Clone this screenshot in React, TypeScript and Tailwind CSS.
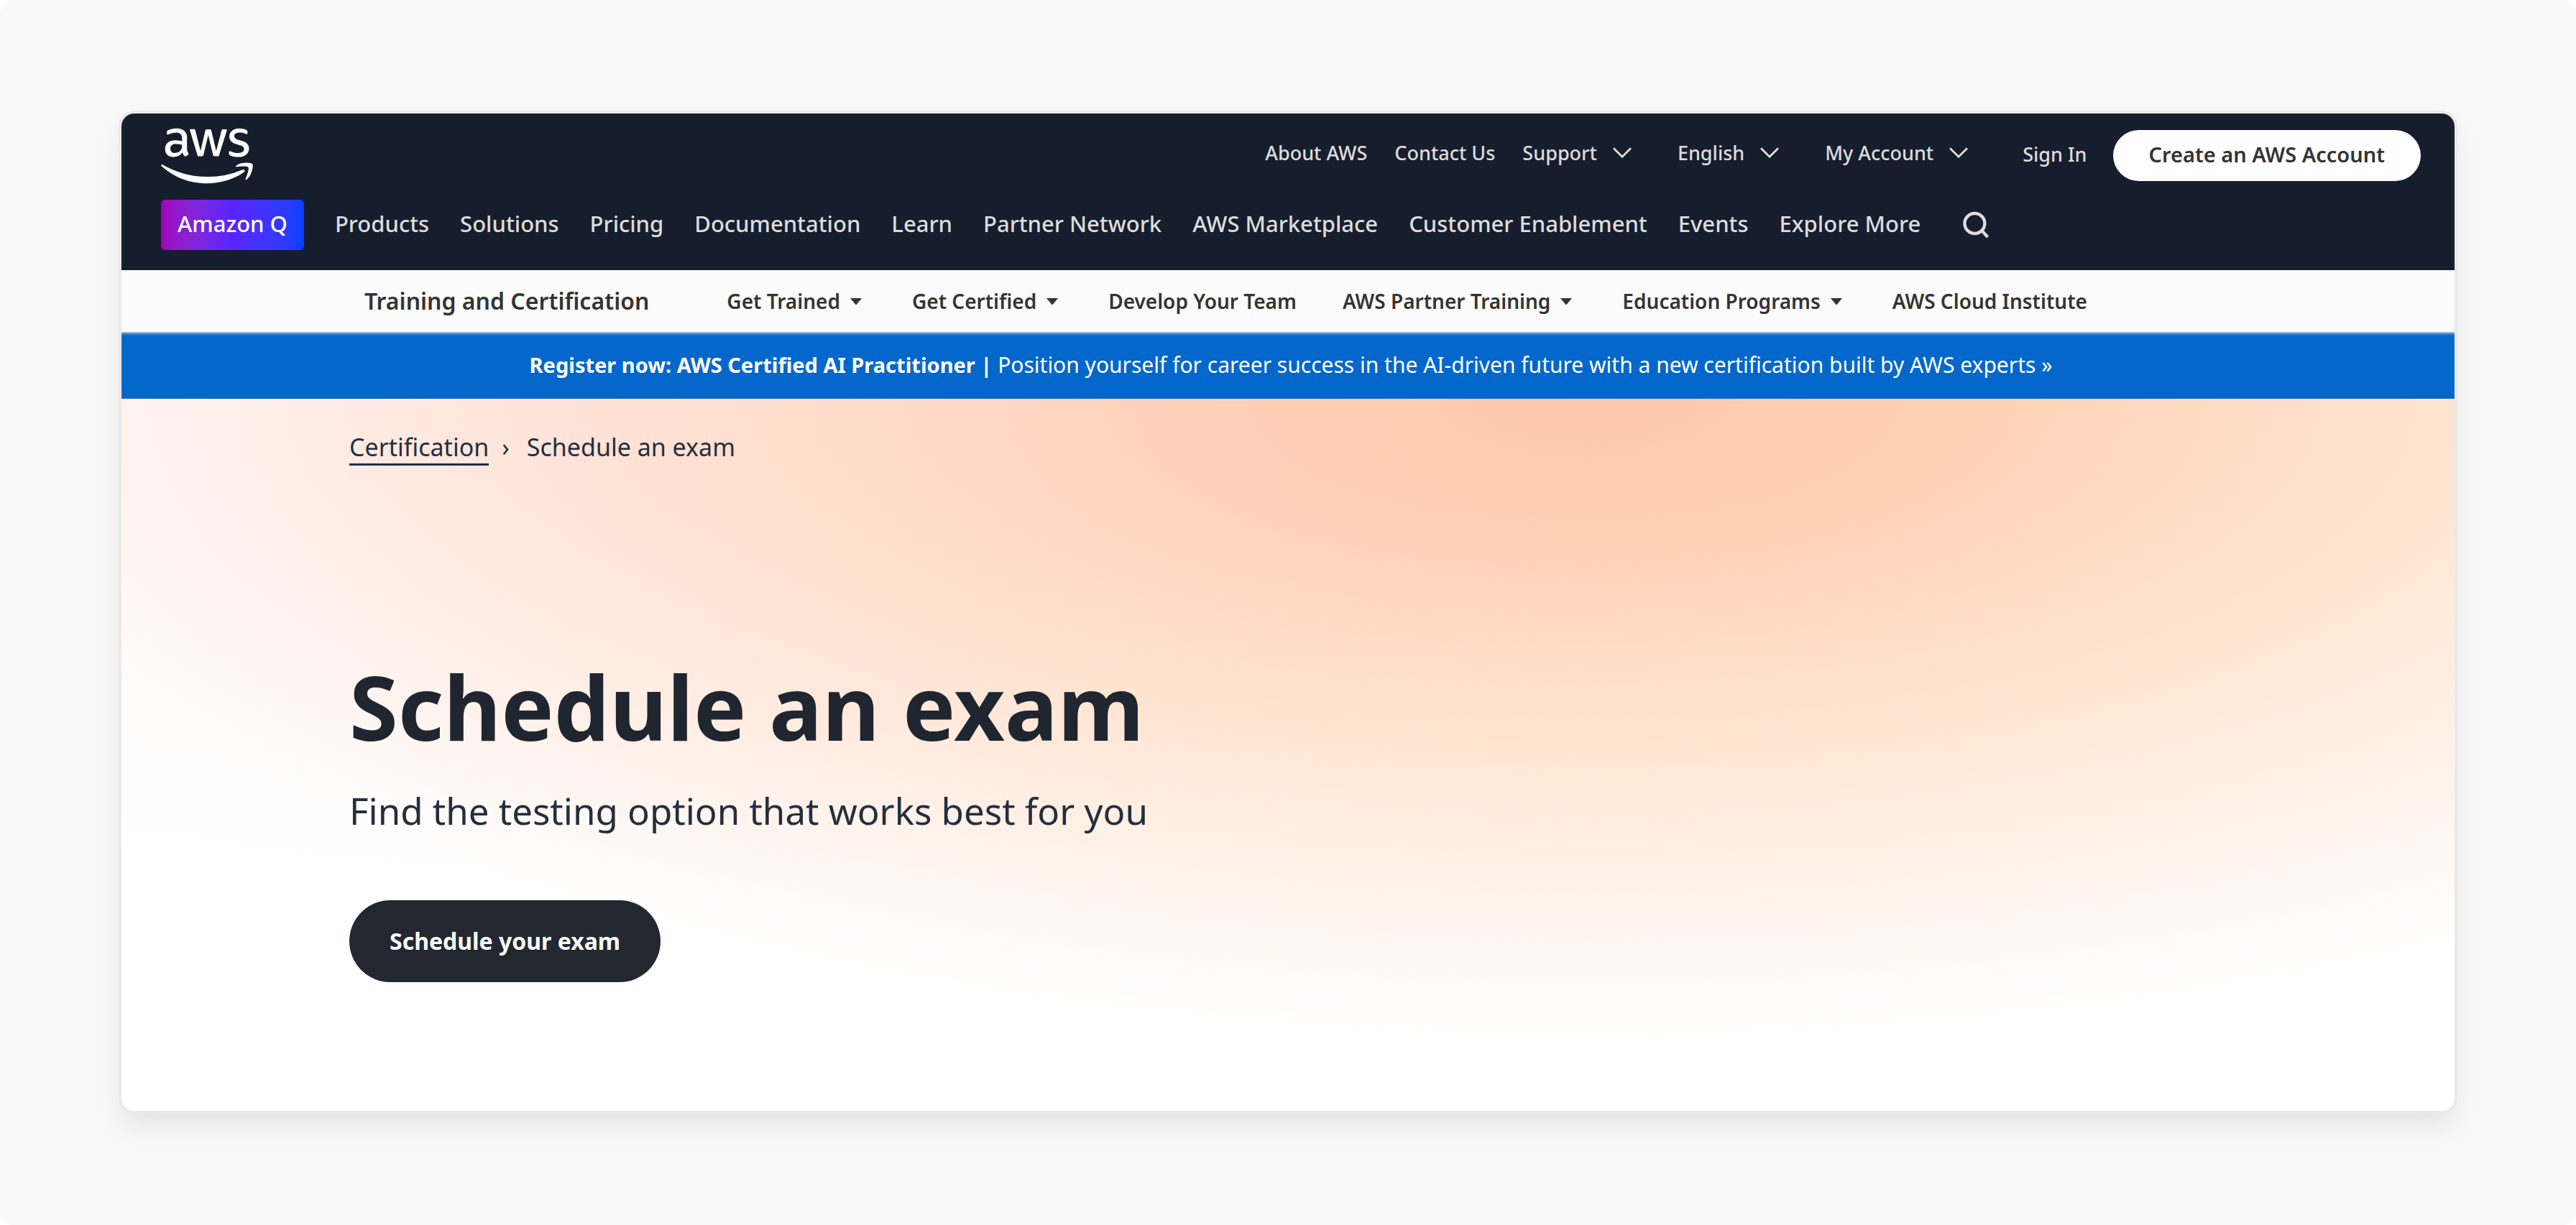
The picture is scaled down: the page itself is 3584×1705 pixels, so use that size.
import { FaAws } from "react-icons/fa";

type MenuItem = { label: string; menu?: boolean };

const accountLinks: MenuItem[] = [
  { label: "About AWS" },
  { label: "Contact Us" },
  { label: "Support", menu: true },
  { label: "English", menu: true },
  { label: "My Account", menu: true },
];

const mainLinks = [
  "Products",
  "Solutions",
  "Pricing",
  "Documentation",
  "Learn",
  "Partner Network",
  "AWS Marketplace",
  "Customer Enablement",
  "Events",
  "Explore More",
];

const trainingLinks: MenuItem[] = [
  { label: "Get Trained", menu: true },
  { label: "Get Certified", menu: true },
  { label: "Develop Your Team" },
  { label: "AWS Partner Training", menu: true },
  { label: "Education Programs", menu: true },
  { label: "AWS Cloud Institute" },
];

function Chevron() {
  return (
    <svg viewBox="0 0 26 15" className="h-[15px] w-[26px]" fill="none" stroke="currentColor" strokeWidth="2.8" aria-hidden="true">
      <path d="M1 1.2 13 13.2 25 1.2" />
    </svg>
  );
}

function Caret() {
  return (
    <svg viewBox="0 0 16 9" className="h-[9px] w-4" fill="currentColor" aria-hidden="true">
      <path d="M0 0h16L9 8.4a1.4 1.4 0 0 1-2 0Z" />
    </svg>
  );
}

function SearchIcon() {
  return (
    <svg viewBox="0 0 36 38" className="h-[38px] w-9" fill="none" stroke="currentColor" strokeWidth="4.4" aria-hidden="true">
      <circle cx="16.4" cy="17" r="14" />
      <path d="m26 26.500 8.500 9.500" />
    </svg>
  );
}

function Header() {
  return (
    <header className="bg-[#161e2d] pt-[23px] pr-[47px] pb-7 pl-[55px] text-[#dcdcdc]">
      <div className="flex h-[71px] items-center justify-between">
        <a href="#" aria-label="AWS home" className="text-white">
          <FaAws className="h-[102px] w-32" />
        </a>
        <nav aria-label="Account" className="flex items-center text-[27px] leading-9 font-medium">
          <ul className="mb-2 flex items-center gap-[38px]">
            {accountLinks.map(({ label, menu }) => (
              <li key={label}>
                {menu ? (
                  <button type="button" className="flex items-center gap-[22px] pr-[26px]">
                    {label}
                    <Chevron />
                  </button>
                ) : (
                  <a href="#">{label}</a>
                )}
              </li>
            ))}
          </ul>
          <a href="#" className="mb-1 ml-[50px]">
            Sign In
          </a>
          <a
            href="#"
            className="ml-9 flex h-[71px] items-center rounded-full bg-white px-[50px] pb-1 text-[29px] font-semibold text-[#333]"
          >
            Create an AWS Account
          </a>
        </nav>
      </div>

      <nav aria-label="Main" className="mt-[26px] flex items-center gap-[43px] text-[31px] leading-10 font-medium">
        <a
          href="#"
          className="flex h-[70px] items-center rounded-md bg-linear-to-r from-[#a000b8] via-[#5724ff] to-[#0040ff] px-[23px] pb-1 text-white"
        >
          Amazon Q
        </a>
        {mainLinks.map((label) => (
          <a key={label} href="#" className="pb-1">
            {label}
          </a>
        ))}
        <button type="button" aria-label="Search" className="ml-4">
          <SearchIcon />
        </button>
      </nav>
    </header>
  );
}

function TrainingNav() {
  return (
    <nav
      aria-label="Training and Certification"
      className="flex h-[86px] items-center bg-[#fbfbfb] pl-[338px] text-[28px] leading-9 font-semibold text-[#333]"
    >
      <a href="#" className="text-[32px]">
        Training and Certification
      </a>
      <ul className="ml-[108px] flex items-center gap-16">
        {trainingLinks.map(({ label, menu }) => (
          <li key={label}>
            {menu ? (
              <button type="button" className="flex items-center gap-3.5 pr-[6px]">
                {label}
                <Caret />
              </button>
            ) : (
              <a href="#">{label}</a>
            )}
          </li>
        ))}
      </ul>
    </nav>
  );
}

function Hero() {
  return (
    <main className="bg-[radial-gradient(ellipse_50%_70%_at_20%_0%,rgba(255,195,200,0.2),rgba(255,195,200,0)),radial-gradient(ellipse_70%_90%_at_63%_0%,#fec8ab_0%,#fed2b6_25%,#ffe3ce_50%,#fff1e7_75%,#fff_100%)] px-[317px] pt-11 pb-[179px]">
      <nav aria-label="Breadcrumb" className="flex items-start text-[34px] leading-[46px] text-[#232f3e]">
        <a href="#" className="border-b-[3px] border-[#232f3e]">
          Certification
        </a>
        <span className="ml-[18px]">›</span>
        <span className="ml-6">Schedule an exam</span>
      </nav>
      <h1 className="mt-[266px] text-[123px] leading-[140px] font-bold text-[#20262f]">Schedule an exam</h1>
      <p className="mt-[39px] text-[51px] leading-[70px] text-[#232f3e]">Find the testing option that works best for you</p>
      <a
        href="#"
        className="mt-[90px] inline-flex h-[114px] items-center rounded-full bg-[#222730] px-14 text-[32px] font-bold text-white"
      >
        Schedule your exam
      </a>
    </main>
  );
}

export default function App() {
  return (
    <div className="min-h-screen rounded-[18px] bg-[#f9f9f9] px-[169px] pt-[158px] pb-[159px] font-['Noto_Sans',sans-serif]">
      <div className="overflow-hidden rounded-[18px] bg-white shadow-[0_0_0_4px_#eaeaea,0_20px_36px_rgba(0,0,0,0.09)]">
        <Header />
        <TrainingNav />
        <a
          href="#"
          className="flex h-[93px] items-center justify-center border-t-2 border-[#8fb1d8] bg-[#0467cb] pb-1 pl-2 text-[30px] text-white shadow-[inset_0_2px_3px_#4585c8]"
        >
          <span>
            <b className="text-[29px] font-bold">Register now: AWS Certified AI Practitioner |</b> Position yourself for
            career success in the AI-driven future with a new certification built by AWS experts »
          </span>
        </a>
        <Hero />
      </div>
    </div>
  );
}
